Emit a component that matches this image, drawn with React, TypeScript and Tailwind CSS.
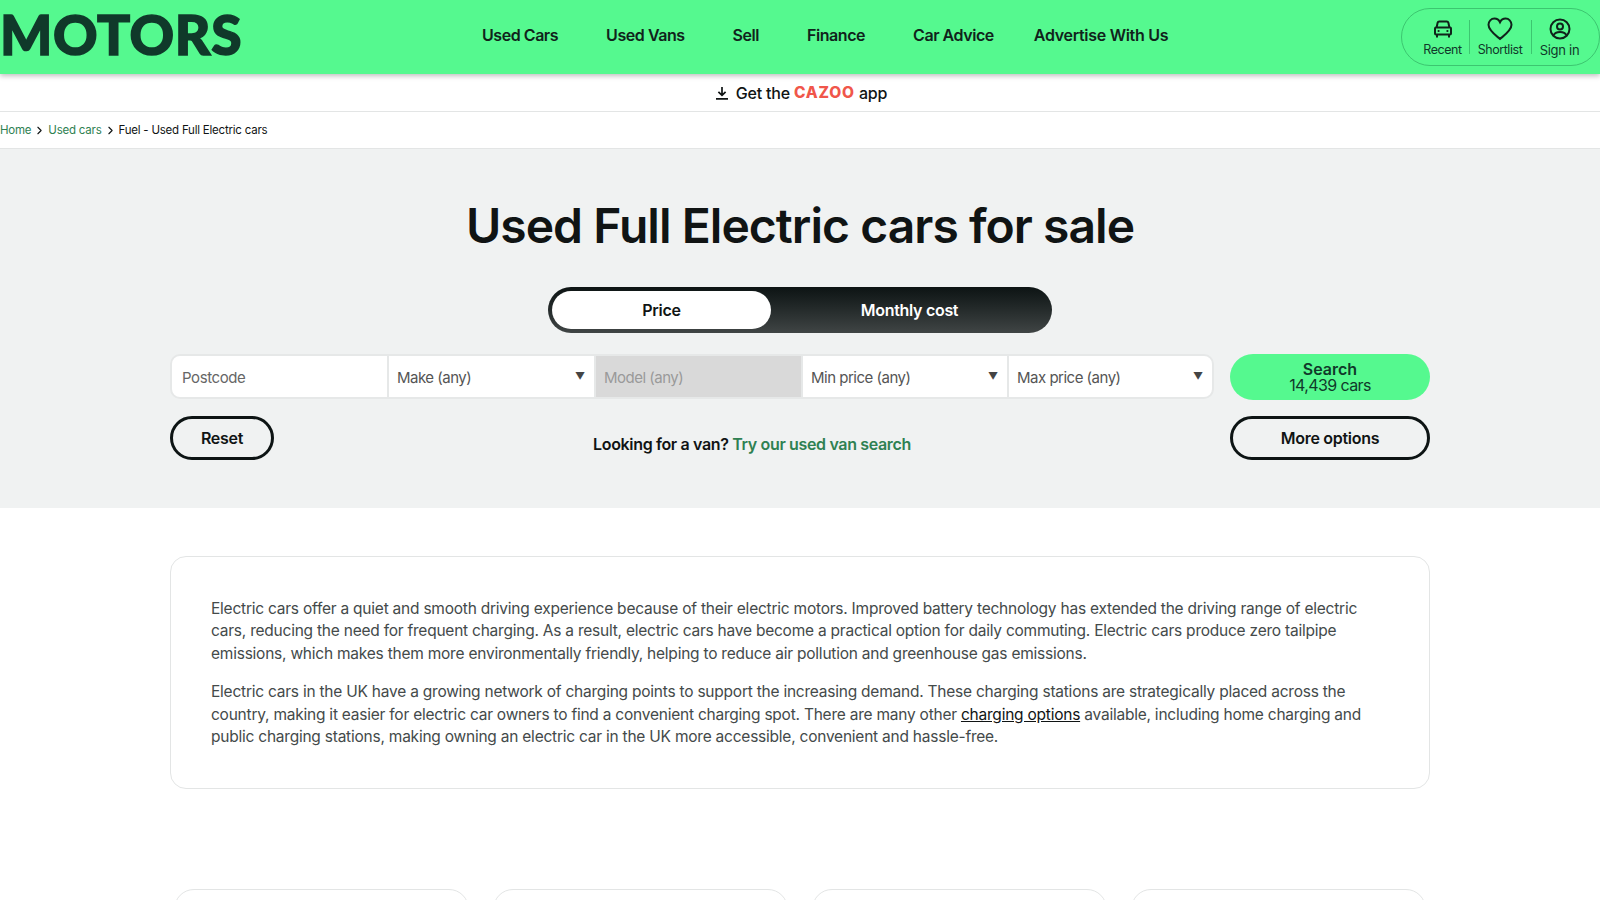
import { ChevronRight } from 'lucide-react'

const font = { fontFamily: 'Inter, "Noto Sans", sans-serif' }

function CarIcon() {
  return (
    <svg width="20" height="18" viewBox="0 0 20 18" fill="none" stroke="#10231b" strokeWidth="2">
      <path d="M3.6 7.5 L4.6 2.8 C4.8 2 5.4 1.5 6.2 1.5 H13.8 C14.6 1.5 15.2 2 15.4 2.8 L16.4 7.5" />
      <rect x="2" y="7.5" width="16" height="7" rx="1" />
      <path d="M4 15v2.5M16 15v2.5" />
      <circle cx="5.6" cy="11" r="1.1" fill="#10231b" stroke="none" />
      <circle cx="14.4" cy="11" r="1.1" fill="#10231b" stroke="none" />
    </svg>
  )
}

function HeartIcon() {
  return (
    <svg width="26" height="24" viewBox="0 0 26 24" fill="none" stroke="#10231b" strokeWidth="2">
      <path d="M13 22 C9 18.5 1.5 13.5 1.5 7.8 C1.5 4.2 4.2 1.6 7.4 1.6 C9.8 1.6 11.9 3 13 5.2 C14.1 3 16.2 1.6 18.6 1.6 C21.8 1.6 24.5 4.2 24.5 7.8 C24.5 13.5 17 18.5 13 22 Z" />
    </svg>
  )
}

function UserIcon() {
  return (
    <svg width="22" height="22" viewBox="0 0 22 22" fill="none" stroke="#10231b" strokeWidth="2">
      <circle cx="11" cy="11" r="9.5" />
      <circle cx="11" cy="8.6" r="3" />
      <path d="M4.6 17.5 C5.6 14.8 8 14 11 14 C14 14 16.4 14.8 17.4 17.5" />
    </svg>
  )
}

function DownloadIcon() {
  return (
    <svg width="14" height="14" viewBox="0 0 14 14" fill="none" stroke="#101414" strokeWidth="1.7">
      <path d="M7 1v8M3.4 5.8 7 9.4l3.6-3.6M1 12.8h12" />
    </svg>
  )
}

function SelectBox({ label, w, disabled }: { label: string; w: string; disabled?: boolean }) {
  return (
    <div className={`${w} flex items-center justify-between pl-[8px] pr-[9px] border-l-2 border-[#e6e8e8] ${disabled ? 'bg-[#d9d9d9] text-[#9a9a9a]' : 'text-[#555]'}`}>
      <span className="text-[15px] tracking-[-0.5px] pt-[3px]">{label}</span>
      {!disabled && <span className="text-[10px] text-[#444]">▼</span>}
    </div>
  )
}

export default function App() {
  const nav = ['Used Cars', 'Used Vans', 'Sell', 'Finance', 'Car Advice']

  return (
    <div style={font} className="h-[900px] overflow-hidden bg-white text-[#101414]">
      <header className="relative z-10 h-[74px] bg-[#55f98f] shadow-[0_2px_5px_rgba(0,0,0,0.25)] flex items-start">
        <div className="w-[482px] shrink-0 h-[74px] flex items-center">
          <span className="text-[55px] leading-none font-black text-[#10392a] tracking-[0.6px] [-webkit-text-stroke:1.5px_#10392a] -mt-[5px]" style={{ fontFamily: 'Lato, Inter, sans-serif' }}>MOTORS</span>
        </div>
        <nav className="flex items-center h-[70px] text-[16px] font-semibold text-[#10231b] tracking-[-0.45px]">
          {nav.map(n => (
            <a key={n} className="mr-[48px]">{n}</a>
          ))}
          <a className="-ml-[8px] tracking-[-0.3px]">Advertise With Us</a>
        </nav>
        <div className="ml-auto mt-[8px] h-[58px] w-[199px] rounded-[30px] border border-[#3cc670] flex items-center pl-[21px] text-[12.5px] tracking-[-0.45px] text-[#10392a]">
          <div className="flex flex-col items-center w-[39px] mt-[5px]">
            <CarIcon />
            <span className="mt-[3px]">Recent</span>
          </div>
          <div className="w-px h-[34px] bg-[#3cc670] mx-[7px]" />
          <div className="flex flex-col items-center w-[46px] mt-[3px]">
            <HeartIcon />
            <span>Shortlist</span>
          </div>
          <div className="w-px h-[34px] bg-[#3cc670] mx-[8px]" />
          <div className="flex flex-col items-center w-[39px] mt-[5px]">
            <UserIcon />
            <span className="mt-[1px] text-[13px] tracking-[-0.3px] whitespace-nowrap">Sign in</span>
          </div>
        </div>
      </header>

      <div className="h-[38px] flex items-center justify-center border-b border-[#e3e5e5] text-[16px] font-medium tracking-[-0.2px] pl-[2px]">
        <DownloadIcon />
        <span className="ml-[7px]">Get the</span>
        <span className="mx-[4px] text-[15.5px] font-extrabold text-[#f0564a] tracking-[0.8px] leading-none">CAZOO</span>
        <span>app</span>
      </div>

      <div className="h-[37px] flex items-center border-b border-[#e3e5e5] text-[11.5px] tracking-[-0.22px] pt-[1px]">
        <a className="text-[#2f8152]">Home</a>
        <ChevronRight size={13} strokeWidth={2} className="mx-[2px]" />
        <a className="text-[#2f8152]">Used cars</a>
        <ChevronRight size={13} strokeWidth={2} className="mx-[2px]" />
        <span>Fuel - Used Full Electric cars</span>
      </div>

      <section className="h-[359px] bg-[#f0f2f2] pt-[45px]">
        <h1 className="text-center text-[48px] leading-[64px] font-semibold tracking-[-0.95px]">Used Full Electric cars for sale</h1>

        <div className="mt-[29px] mx-auto w-[504px] h-[46px] rounded-full bg-gradient-to-b from-[#0d1414] to-[#404545] p-[4px] flex items-center">
          <div className="w-[219px] h-[38px] rounded-full bg-white flex items-center justify-center text-[16px] font-semibold tracking-[-0.3px]">Price</div>
          <div className="flex-1 flex items-center justify-center text-[16px] font-semibold tracking-[-0.3px] text-white">Monthly cost</div>
        </div>

        <div className="w-[1260px] mx-auto mt-[21px] flex justify-between items-start">
          <div className="w-[1044px] h-[45px] rounded-[10px] border-2 border-[#e6e8e8] bg-white overflow-hidden flex">
            <div className="w-[215px] flex items-center pl-[10px] pt-[3px] text-[15px] tracking-[-0.4px] text-[#666]">Postcode</div>
            <SelectBox label="Make (any)" w="w-[207px]" />
            <SelectBox label="Model (any)" w="w-[207px]" disabled />
            <SelectBox label="Min price (any)" w="w-[206px]" />
            <SelectBox label="Max price (any)" w="flex-1" />
          </div>
          <button className="w-[200px] h-[46px] rounded-full bg-[#55f98f] text-[#10392a] flex flex-col items-center justify-center text-[16px] leading-[16px]">
            <span className="font-semibold">Search</span>
            <span className="tracking-[-0.6px]">14,439 cars</span>
          </button>
        </div>

        <div className="w-[1260px] mx-auto mt-[16px] flex justify-between items-start">
          <button className="w-[104px] h-[44px] rounded-full border-[3px] border-[#0d1414] text-[16px] font-semibold tracking-[-0.3px]">Reset</button>
          <p className="mt-[18px] text-[16px] font-semibold leading-[20px] tracking-[-0.35px]">
            Looking for a van? <a className="text-[#2f8152]">Try our used van search</a>
          </p>
          <button className="w-[200px] h-[44px] rounded-full border-[3px] border-[#0d1414] text-[16px] font-semibold tracking-[-0.3px]">More options</button>
        </div>
      </section>

      <section className="w-[1260px] mx-auto mt-[48px] h-[233px] rounded-[16px] border border-[#e3e5e5] px-[40px] pt-[41px] text-[15.5px] leading-[22.4px] tracking-[-0.23px] text-[#444a4a]">
        <p>
          Electric cars offer a quiet and smooth driving experience because of their electric motors. Improved battery technology has extended the driving range of electric cars, reducing the need for frequent charging. As a result, electric cars have become a practical option for daily commuting. Electric cars produce zero tailpipe emissions, which makes them more environmentally friendly, helping to reduce air pollution and greenhouse gas emissions.
        </p>
        <p className="mt-[16px]">
          Electric cars in the UK have a growing network of charging points to support the increasing demand. These charging stations are strategically placed across the country, making it easier for electric car owners to find a convenient charging spot. There are many other <a className="underline text-[#101414]">charging options</a> available, including home charging and public charging stations, making owning an electric car in the UK more accessible, convenient and hassle-free.
        </p>
      </section>

      <div className="w-[1260px] mx-auto mt-[100px] pl-[4px] grid grid-cols-[repeat(4,295px)] gap-x-[24px]">
        {[0, 1, 2, 3].map(i => (
          <div key={i} className="h-[120px] rounded-[20px] border border-[#e3e5e5]" />
        ))}
      </div>
    </div>
  )
}
